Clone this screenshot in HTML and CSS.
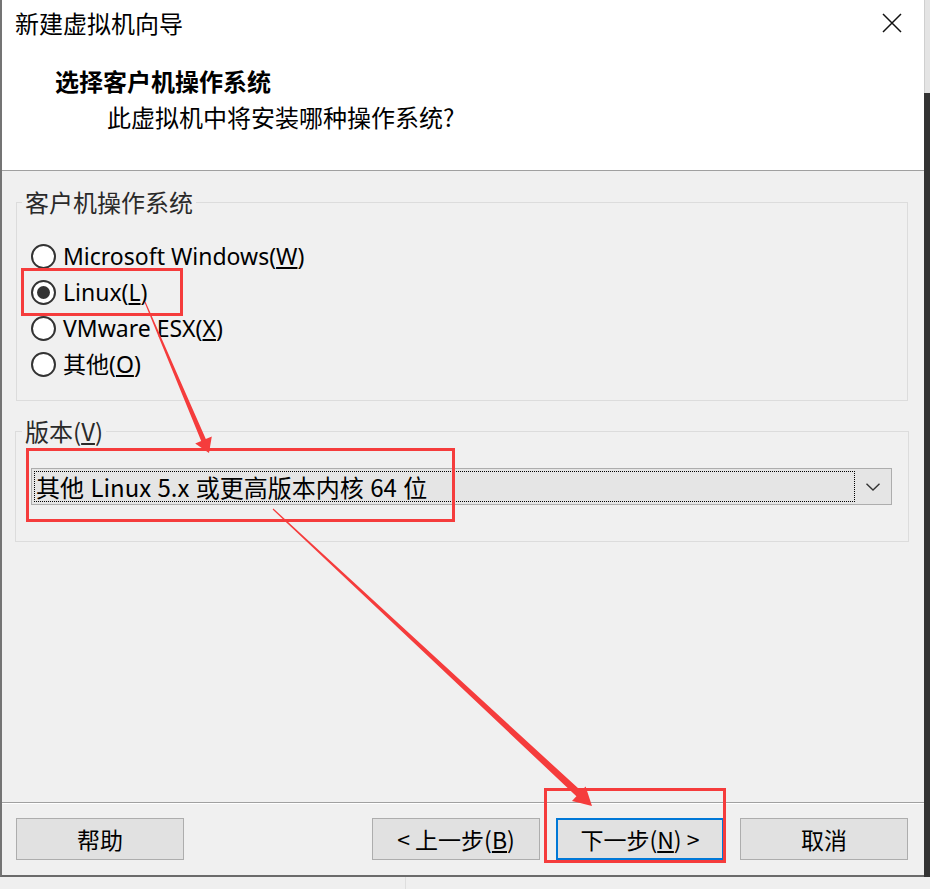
FILE: index.html
```html
<!DOCTYPE html>
<html lang="zh-CN">
<head>
<meta charset="utf-8">
<title>新建虚拟机向导</title>
<link rel="stylesheet" href="styles.css">
</head>
<body>
<div class="desktop">
  <div class="top-row">
    <div class="window">
      <div class="header">
        <div class="titlebar">
          <span class="title">新建虚拟机向导</span>
          <svg class="close" width="20" height="20" viewBox="0 0 20 20"><path d="M1 1 L19 19 M19 1 L1 19" stroke="#111" stroke-width="1.5" fill="none"/></svg>
        </div>
        <div class="heading">选择客户机操作系统</div>
        <div class="subheading">此虚拟机中将安装哪种操作系统?</div>
      </div>
      <div class="main">
        <fieldset class="group group-os">
          <legend>客户机操作系统</legend>
          <div class="radio-row"><span class="radio"></span><span class="label">Microsoft Windows(<u>W</u>)</span></div>
          <div class="radio-row"><span class="radio checked"></span><span class="label">Linux(<u>L</u>)</span></div>
          <div class="radio-row"><span class="radio"></span><span class="label">VMware ESX(<u>X</u>)</span></div>
          <div class="radio-row"><span class="radio"></span><span class="label">其他(<u>O</u>)</span></div>
        </fieldset>
        <fieldset class="group group-ver">
          <legend>版本(<u>V</u>)</legend>
          <div class="select">
            <div class="select-value">其他 Linux 5.x 或更高版本内核 64 位</div>
            <div class="select-arrow"><svg width="14" height="8" viewBox="0 0 14 8"><path d="M0.5 0.8 L7 7 L13.5 0.8" stroke="#333" stroke-width="1.4" fill="none"/></svg></div>
          </div>
        </fieldset>
      </div>
      <div class="footer">
        <button class="btn">帮助</button>
        <div class="btn-group">
          <button class="btn">&lt; 上一步(<u>B</u>)</button>
          <button class="btn btn-default">下一步(<u>N</u>) &gt;</button>
          <button class="btn">取消</button>
        </div>
      </div>
    </div>
    <div class="side-strip">
      <div class="side-top"></div>
      <div class="side-dark"></div>
    </div>
  </div>
  <div class="bottom-strip">
    <div class="bottom-left"></div>
    <div class="bottom-right"></div>
  </div>

  <svg class="annotations" width="930" height="889" viewBox="0 0 930 889">
    <g fill="none" stroke="#f53c3c" stroke-width="3">
      <rect x="22.5" y="269.5" width="159" height="45"/>
      <rect x="27.5" y="449.5" width="426" height="71"/>
      <rect x="545.5" y="789.5" width="179" height="72"/>
    </g>
    <g fill="#f53c3c">
      <polygon points="144.5,302.2 145.5,301.8 205.8,439.0 211.8,436.5 209,453 195.2,443.5 201.2,441.0"/>
      <polygon points="272.6,509.4 273.4,508.6 581.2,791.1 585.6,786.4 592,806 572,801 576.4,796.3"/>
    </g>
  </svg>
</div>
</body>
</html>
```
FILE: styles.css
```css
* { box-sizing: border-box; }
html, body { margin: 0; padding: 0; }
body {
  width: 930px;
  height: 889px;
  overflow: hidden;
  font-family: "Noto Sans", "Noto Sans CJK SC", sans-serif;
  color: #000;
  background: #f0f0f0;
}
.desktop {
  position: relative;
  width: 930px;
  height: 889px;
  display: flex;
  flex-direction: column;
}
.top-row {
  display: flex;
  height: 877px;
}
.window {
  width: 924px;
  height: 877px;
  border-left: 2px solid #747474;
  border-bottom: 2px solid #6a6a6a;
  display: flex;
  flex-direction: column;
  background: #f0f0f0;
}
.header {
  height: 171px;
  background: #fff;
  border-bottom: 1px solid #a0a0a0;
  font-family: "Noto Sans CJK SC", sans-serif;
}
.titlebar {
  height: 46px;
  display: flex;
  align-items: center;
  justify-content: space-between;
  padding: 0 22px 0 13px;
}
.title {
  font-size: 24px;
  line-height: 46px;
}
.close { display: block; }
.heading {
  margin: 17px 0 0 53px;
  font-size: 24px;
  font-weight: bold;
  line-height: 36px;
}
.subheading {
  margin-left: 105px;
  font-size: 24px;
  line-height: 36px;
}
.main {
  flex: 1;
  padding-top: 17px;
}
.group {
  margin: 0;
  border: 1px solid #dcdcdc;
  min-width: 0;
}
.group legend {
  margin-left: -9px;
  padding: 0 3px;
  font-family: "Noto Sans CJK SC", sans-serif;
  font-size: 24px;
  line-height: 28px;
  color: #2a2a2a;
}
.group-os {
  margin: 0 16px 0 14px;
  padding: 22px 0 18px 14px;
}
.radio-row {
  display: flex;
  align-items: center;
  height: 36px;
}
.radio {
  width: 25px;
  height: 25px;
  border: 2px solid #333;
  border-radius: 50%;
  background: #fff;
  display: flex;
  align-items: center;
  justify-content: center;
  flex: none;
}
.radio.checked::after {
  content: "";
  width: 13px;
  height: 13px;
  border-radius: 50%;
  background: #333;
}
.label {
  margin-left: 7px;
  font-size: 23px;
  line-height: 36px;
}
.group-ver {
  margin: 16px 15px 0 13px;
  padding: 23px 16px 36px 15px;
}
.select {
  height: 37px;
  border: 1px solid #adadad;
  background: #e5e5e5;
  display: flex;
  padding: 2px 0 2px 2px;
}
.select-value {
  width: 821px;
  border: 1px dotted #000;
  padding-left: 1px;
  font-family: "Noto Sans CJK SC", sans-serif;
  font-size: 24px;
  word-spacing: 1px;
  line-height: 29px;
  white-space: nowrap;
}
.select-arrow {
  flex: 1;
  display: flex;
  align-items: center;
  justify-content: center;
}
.select-arrow svg { display: block; }
.footer {
  height: 73px;
  border-top: 1px solid #a0a0a0;
  box-shadow: inset 0 1px 0 #fff;
  display: flex;
  justify-content: space-between;
  padding: 15px 16px 15px 14px;
}
.btn-group {
  display: flex;
  gap: 16px;
}
.btn {
  width: 168px;
  height: 42px;
  border: 1px solid #adadad;
  background: #e1e1e1;
  font-family: "Noto Sans CJK SC", sans-serif;
  font-size: 23px;
  line-height: 38px;
  color: #000;
  padding: 0;
  margin: 0;
}
.btn-default {
  border: 2px solid #0078d7;
}
.side-strip {
  width: 6px;
  display: flex;
  flex-direction: column;
}
.side-top {
  height: 93px;
  background: #e4e4e4;
  border-left: 1px solid #cfcfcf;
}
.side-dark {
  flex: 1;
  background: #333;
}
.bottom-strip {
  height: 12px;
  display: flex;
  background: #efefef;
}
.bottom-left {
  width: 406px;
  border-right: 1px solid #dedede;
}
.bottom-right { flex: 1; }
.annotations {
  position: absolute;
  left: 0;
  top: 0;
  pointer-events: none;
}
```
